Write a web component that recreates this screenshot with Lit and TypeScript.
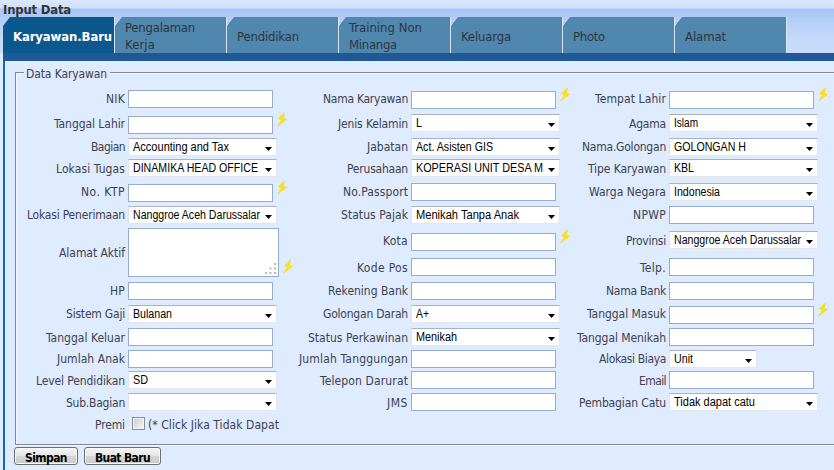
import { LitElement, html, css, svg, nothing } from "lit";
import { customElement, property } from "lit/decorators.js";
import { classMap } from "lit/directives/class-map.js";

type Kind = "input" | "select" | "area" | "check";
interface Field {
  label: string;
  w: number;
  kind: Kind;
  col: number;
  row: number;
  dy: number;
  value?: string;
  vw?: number;
  bolt?: boolean;
  short?: boolean;
}

const f = (
  col: number, row: number, label: string, w: number, kind: Kind, dy: number,
  extra: Partial<Field> = {}
): Field => ({ col, row, label, w, kind, dy, ...extra });
const v = (value: string, vw: number) => ({ value, vw });
const bolt = { bolt: true };

const FIELDS: Field[] = [
  f(1, 1, "NIK", 19, "input", 1),
  f(2, 1, "Nama Karyawan", 85, "input", 2, bolt),
  f(3, 1, "Tempat Lahir", 71, "input", 2, bolt),
  f(1, 2, "Tanggal Lahir", 71, "input", 2, bolt),
  f(2, 2, "Jenis Kelamin", 70, "select", 0, v("L", 6)),
  f(3, 2, "Agama", 37, "select", 0, v("Islam", 24)),
  f(1, 3, "Bagian", 34, "select", 1, v("Accounting and Tax", 96)),
  f(2, 3, "Jabatan", 41, "select", 1, v("Act. Asisten GIS", 77)),
  f(3, 3, "Nama.Golongan", 84, "select", 1, v("GOLONGAN H", 72)),
  f(1, 4, "Lokasi Tugas", 69, "select", 0, v("DINAMIKA HEAD OFFICE", 125)),
  f(2, 4, "Perusahaan", 61, "select", 0, v("KOPERASI UNIT DESA M", 127)),
  f(3, 4, "Tipe Karyawan", 78, "select", 0, v("KBL", 20)),
  f(1, 5, "No. KTP", 44, "input", 2, bolt),
  f(2, 5, "No.Passport", 65, "input", 1),
  f(3, 5, "Warga Negara", 77, "select", 1, v("Indonesia", 46)),
  f(1, 6, "Lokasi Penerimaan", 98, "select", 1, v("Nanggroe Aceh Darussalar", 127)),
  f(2, 6, "Status Pajak", 67, "select", 1, v("Menikah Tanpa Anak", 103)),
  f(3, 6, "NPWP", 33, "input", 1),
  f(1, 7, "Alamat Aktif", 66, "area", -3, bolt),
  f(2, 7, "Kota", 25, "input", 2, bolt),
  f(3, 7, "Provinsi", 40, "select", 0, v("Nanggroe Aceh Darussalar", 127)),
  f(2, 8, "Kode Pos", 51, "input", 0),
  f(3, 8, "Telp.", 26, "input", 0),
  f(1, 9, "HP", 15, "input", 1),
  f(2, 9, "Rekening Bank", 80, "input", 1),
  f(3, 9, "Nama Bank", 60, "input", 1),
  f(1, 10, "Sistem Gaji", 59, "select", 1, v("Bulanan", 39)),
  f(2, 10, "Golongan Darah", 85, "select", 1, v("A+", 13)),
  f(3, 10, "Tanggal Masuk", 79, "input", 2, bolt),
  f(1, 11, "Tanggal Keluar", 79, "input", 0),
  f(2, 11, "Status Perkawinan", 100, "select", 0, v("Menikah", 41)),
  f(3, 11, "Tanggal Menikah", 89, "input", 0),
  f(1, 12, "Jumlah Anak", 68, "input", 1),
  f(2, 12, "Jumlah Tanggungan", 109, "input", 1),
  f(3, 12, "Alokasi Biaya", 67, "select", 1, { ...v("Unit", 19), short: true }),
  f(1, 13, "Level Pendidikan", 89, "select", 0, v("SD", 15)),
  f(2, 13, "Telepon Darurat", 88, "input", 0),
  f(3, 13, "Email", 27, "input", 0),
  f(1, 14, "Sub.Bagian", 59, "select", 0),
  f(2, 14, "JMS", 21, "input", 0),
  f(3, 14, "Pembagian Catu", 87, "select", 0, v("Tidak dapat catu", 81)),
  f(1, 15, "Premi", 30, "check", 2, v("(* Click Jika Tidak Dapat", 131)),
];

const TABS: { lines: [string, number][]; active?: boolean }[] = [
  { lines: [["Karyawan.Baru", 99]], active: true },
  { lines: [["Pengalaman", 70], ["Kerja", 30]] },
  { lines: [["Pendidikan", 62]] },
  { lines: [["Training Non", 73], ["Minanga", 48]] },
  { lines: [["Keluarga", 50]] },
  { lines: [["Photo", 32]] },
  { lines: [["Alamat", 41]] },
];

/** One line of text fitted to a width, by its tracking or (squeeze) by its scale. */
@customElement("fit-text")
class FitText extends LitElement {
  @property() text = "";
  @property({ type: Number }) width = 0;
  @property({ type: Boolean }) squeeze = false;

  static styles = css`
    :host { display: block; flex: none; white-space: pre; }
    .t { display: inline-block; transform-origin: 0 50%; }
  `;

  render() {
    return html`<span class="t">${this.text}</span>`;
  }

  updated() {
    const el = this.renderRoot.querySelector<HTMLElement>(".t")!;
    el.style.letterSpacing = "0px";
    el.style.transform = "none";
    const natural = el.getBoundingClientRect().width;
    if (this.squeeze) {
      el.style.transform = `scaleX(${(this.width / natural).toFixed(4)})`;
    } else {
      el.style.letterSpacing = `${((this.width - natural) / this.text.length).toFixed(3)}px`;
    }
  }
}

@customElement("form-field")
class FormField extends LitElement {
  @property({ attribute: false }) field!: Field;

  static styles = css`
    :host { display: flex; align-items: flex-start; min-width: 0; }
    .label {
      width: 109px; flex: none; display: flex; justify-content: flex-end;
      padding-top: 1px; margin-right: 3px; line-height: 18px; color: #3c4250;
    }
    .label.tall { padding-top: 13px; }
    .ctl { display: flex; align-items: flex-start; }
    .box { box-sizing: border-box; background: #fff; flex: none; position: relative; }
    .input { width: 145px; height: 18px; border: 1px solid #94acd0; }
    .area { width: 151px; height: 49px; border: 1px solid #94acd0; }
    .select {
      width: 149px; height: 18px; display: flex; align-items: center;
      border: 1px solid #e3e6ed; border-top-color: #abb2bf; border-left-color: #dfe3ea;
      padding-left: 4px; color: #000; font: 12px/16px "Liberation Sans", Arial, sans-serif;
    }
    .short { width: 88px; }
    .value { flex: 1; min-width: 0; }
    .arrow { width: 7px; height: 4px; margin: 4px 4px 0 5px; flex: none; fill: #000; display: block; }
    .grip { position: absolute; right: 1px; bottom: 1px; width: 12px; height: 12px; fill: #b9b9b9; }
    .bolt { width: 10px; height: 15px; margin: -4px 0 0 4px; flex: none; fill: #ffe60a; stroke: #f2cf00; stroke-width: .5; }
    .bolt.low { margin-top: 31px; }
    .check {
      box-sizing: border-box; width: 13px; height: 13px; margin-left: 4px; flex: none;
      border: 1px solid #8e8f8f; background: linear-gradient(135deg, #c9ccd1, #f7f7f7);
      box-shadow: inset 0 0 0 1px #f4f4f4;
    }
    .note { margin: -1px 0 0 3px; line-height: 18px; color: #3c4250; }
  `;

  private bolt(low: boolean) {
    return html`<svg class=${classMap({ bolt: true, low })} viewBox="0 0 10 15">
      ${svg`<path d="M7.6 .8 L1.4 6.6 L4.8 7.9 L.6 14 L9.4 7.4 L6 6.2 Z"/>`}</svg>`;
  }

  private control(d: Field) {
    switch (d.kind) {
      case "input":
        return html`<div class="box input"></div>`;
      case "area":
        return html`<div class="box area"><svg class="grip" viewBox="0 0 12 12">
          ${[[9, 0], [9, 4.5], [4.5, 4.5], [9, 9], [4.5, 9], [0, 9]].map(
            ([x, y]) => svg`<rect x=${x} y=${y} width="2" height="2"/>`
          )}</svg></div>`;
      case "check":
        return html`<div class="check"></div>
          <fit-text class="note" .text=${d.value!} .width=${d.vw!}></fit-text>`;
      default:
        return html`<div class=${classMap({ box: true, select: true, short: !!d.short })}>
          <div class="value">${d.value
            ? html`<fit-text squeeze .text=${d.value} .width=${d.vw!}></fit-text>` : nothing}</div>
          <svg class="arrow" viewBox="0 0 7 4"><path d="M0 0H7L3.5 4Z"/></svg>
        </div>`;
    }
  }

  render() {
    const d = this.field;
    return html`
      <div class=${classMap({ label: true, tall: d.kind === "area" })}>
        <fit-text .text=${d.label} .width=${d.w}></fit-text>
      </div>
      <div class="ctl" style="margin-top:${d.dy}px">
        ${this.control(d)} ${d.bolt ? this.bolt(d.kind === "area") : nothing}
      </div>`;
  }
}

@customElement("app-root")
class AppRoot extends LitElement {
  static styles = css`
    :host {
      display: block; width: 834px; height: 470px; overflow: hidden; background: #dfebfe;
      font: 12px/18px "DejaVu Sans Condensed", "DejaVu Sans", sans-serif;
      font-stretch: condensed; color: #3c4250;
    }
    .head {
      height: 17px; box-sizing: border-box; padding: 1px 0 0 3px;
      background: linear-gradient(#d9e8fc 0, #cfe1fb 8px, #a8c7f5 9px, #aecbf6 17px);
    }
    .title { font-weight: bold; font-size: 13px; color: #333; }
    .strip { display: flex; height: 36px; padding-left: 3px; background: linear-gradient(#b1cdf6, #c5daf9 60%, #c8dcf9); }
    .tab {
      width: 112px; box-sizing: border-box; border-right: 1px solid #dbe6f3;
      display: flex;
    }
    .face {
      flex: 1; display: flex; flex-direction: column; justify-content: center; padding: 2px 0 0 10px;
      background: #5087ae; clip-path: polygon(7px 0, 100% 0, 100% 100%, 0 100%, 0 9px);
      font-size: 13px; line-height: 17px; color: #2f3540;
    }
    .on .face { background: #0b588f; color: #fff; font-weight: bold; }
    .bar { height: 8px; margin-left: 3px; background: #1f5797; }
    .panel { margin-left: 3px; height: 409px; border-left: 2px solid #1b66b2; }
    .set {
      box-sizing: border-box; width: 880px; height: 373px; margin-left: 10px;
      position: relative; top: 11px; border: 1px solid #85888d; box-shadow: inset 1px 1px #f2f7ff, 0 1px #f2f7ff;
      padding-top: 16px;
    }
    .legend { position: absolute; left: 8px; top: -8px; padding: 0 3px 0 2px; background: #dfebfe; }
    .grid {
      display: grid; grid-template-columns: 283px 258px 300px;
      grid-template-rows: 25px 23px 22px 23px 23px 26px 27px 23px 23px 24px 21px 22px 22px 22px 22px;
    }
    .cell { grid-row-end: span 1; }
    .cell.tall { grid-row-end: span 2; }
    .buttons { display: flex; gap: 6px; margin: 13px 0 0 9px; }
    .btn {
      box-sizing: border-box; height: 18px; width: 64px; display: flex; justify-content: center;
      border: 1px solid #707070; border-radius: 3px; color: #000; font-weight: bold;
      background: linear-gradient(#f4f4f4, #e6e6e6 48%, #d5d5d5 52%, #cbcbcb);
      box-shadow: inset 0 0 0 1px #f6f6f6; line-height: 20px;
    }
    .wide { width: 77px; }
  `;

  render() {
    return html`
      <div class="head"><fit-text class="title" .text=${"Input Data"} .width=${68}></fit-text></div>
      <div class="strip">
        ${TABS.map((t) => html`<div class=${classMap({ tab: true, on: !!t.active })}>
          <div class="face">${t.lines.map(([s, w]) =>
            html`<fit-text .text=${s} .width=${w}></fit-text>`)}</div>
        </div>`)}
      </div>
      <div class="bar"></div>
      <div class="panel">
        <div class="set">
          <fit-text class="legend" .text=${"Data Karyawan"} .width=${81}></fit-text>
          <div class="grid">
            ${FIELDS.map((d) => html`<form-field
              class=${classMap({ cell: true, tall: d.kind === "area" })} .field=${d}
              style="grid-column-start:${d.col};grid-row-start:${d.row}"></form-field>`)}
          </div>
        </div>
        <div class="buttons">
          <div class="btn"><fit-text .text=${"Simpan"} .width=${42}></fit-text></div>
          <div class="btn wide"><fit-text .text=${"Buat Baru"} .width=${55}></fit-text></div>
        </div>
      </div>`;
  }
}
